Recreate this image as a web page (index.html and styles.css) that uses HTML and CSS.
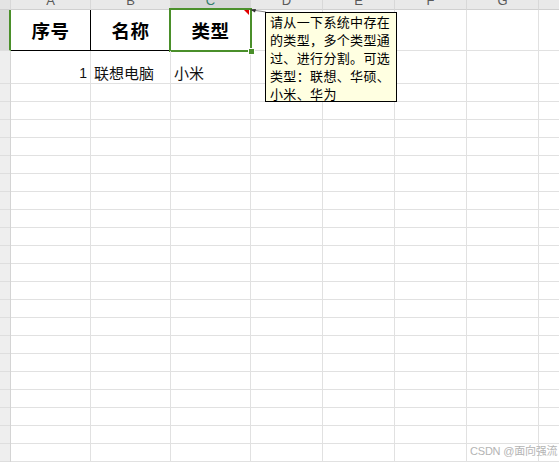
FILE: index.html
```html
<!DOCTYPE html>
<html lang="zh">
<head>
<meta charset="utf-8">
<title>Sheet</title>
<link rel="stylesheet" href="styles.css">
</head>
<body>
<div class="sheet">
  <div class="ch corner"></div>
  <div class="ch"><span>A</span></div>
  <div class="ch"><span>B</span></div>
  <div class="ch ch-sel"><span>C</span></div>
  <div class="ch"><span>D</span></div>
  <div class="ch"><span>E</span></div>
  <div class="ch"><span>F</span></div>
  <div class="ch"><span>G</span></div>
  <div class="ch ch-last"></div>

  <div class="rh rh-sel"></div>
  <div class="c title bl">序号</div>
  <div class="c title bl">名称</div>
  <div class="c title bl sel">类型
    <span class="note-mark"></span>
    <span class="handle"></span>
  </div>
  <div class="c"></div>
  <div class="c"></div>
  <div class="c"></div>
  <div class="c"></div>
  <div class="c last"></div>

  <div class="rh"></div>
  <div class="c val num">1</div>
  <div class="c val">联想电脑</div>
  <div class="c val">小米</div>
  <div class="c"></div>
  <div class="c"></div>
  <div class="c"></div>
  <div class="c"></div>
  <div class="c last"></div>

  <div class="rh fill"></div>
  <div class="c fill"></div>
  <div class="c fill"></div>
  <div class="c fill"></div>
  <div class="c fill"></div>
  <div class="c fill"></div>
  <div class="c fill"></div>
  <div class="c fill"></div>
  <div class="c fill last"></div>
</div>

<svg class="leader" width="20" height="8" viewBox="0 0 20 8">
  <line x1="2" y1="2" x2="16" y2="4" stroke="#888" stroke-width="1"/>
  <polygon points="0,1.5 6,1 5,4.5" fill="#333"/>
</svg>

<div class="note">请从一下系统中存在<br>的类型，多个类型通<br>过、进行分割。可选<br>类型：联想、华硕、<br>小米、华为</div>

<div class="mark">CSDN @面向强流</div>
</body>
</html>
```

FILE: styles.css
```css
html, body {
  margin: 0;
  padding: 0;
  background: #fff;
  overflow: hidden;
}
body {
  width: 559px;
  height: 462px;
  position: relative;
  font-family: "Noto Sans CJK SC", "Noto Sans", sans-serif;
}
.sheet {
  display: grid;
  grid-template-columns: 11px 80px 80px 80px 72px 72px 72px 72px 1fr;
  grid-template-rows: 10px 41px 33px 1fr;
  width: 559px;
  height: 462px;
}
.ch {
  box-sizing: border-box;
  background: #e9e9e9;
  border-right: 1px solid #d8d8d8;
  border-bottom: 1px solid #d0d0d0;
  overflow: hidden;
  text-align: center;
  font-family: "Liberation Sans", Arial, sans-serif;
  font-size: 13px;
  line-height: 0;
  color: #5a5a5a;
}
.ch span {
  display: block;
  padding-top: 1px;
}
.ch.corner {
  background: #e4e4e4;
}
.ch-sel {
  background: #d6d6d6;
  color: #2f7d6a;
}
.ch-last { border-right: none; }

.rh {
  box-sizing: border-box;
  background: #eeeeee;
  border-right: 1px solid #d4d4d4;
  border-bottom: 1px solid #dedede;
}
.rh-sel {
  background: #dadada;
  border-right: 2px solid #4a8f2a;
}
.rh.fill {
  border-bottom: none;
  background-color: #eeeeee;
  background-image: repeating-linear-gradient(to bottom, transparent 0, transparent 17px, #dedede 17px, #dedede 18px);
}

.c {
  box-sizing: border-box;
  border-right: 1px solid #e1e1e1;
  border-bottom: 1px solid #e1e1e1;
  position: relative;
}
.c.last { border-right: none; }
.c.fill {
  border-bottom: none;
  background-image: repeating-linear-gradient(to bottom, transparent 0, transparent 17px, #e1e1e1 17px, #e1e1e1 18px);
}

.title {
  display: flex;
  align-items: center;
  justify-content: center;
  font-size: 18.5px;
  font-weight: 700;
  color: #000;
  letter-spacing: 0.5px;
}
.bl {
  border-right: 1px solid #000;
  border-bottom: 1px solid #000;
}
.sel {
  border-right-color: #000;
}
.sel::after {
  content: "";
  position: absolute;
  left: -2px;
  top: -2px;
  right: -2px;
  bottom: -2px;
  border: 2px solid #4a8f2a;
  pointer-events: none;
}
.note-mark {
  position: absolute;
  top: 0;
  right: 1px;
  width: 0;
  height: 0;
  border-top: 5px solid #e00000;
  border-left: 5px solid transparent;
  z-index: 2;
}
.handle {
  position: absolute;
  right: -4px;
  bottom: -4px;
  width: 5px;
  height: 5px;
  background: #4a8f2a;
  border: 1px solid #fff;
  box-sizing: content-box;
  z-index: 3;
  margin: -1px;
}

.val {
  display: flex;
  align-items: flex-end;
  padding: 0 3px 1px 3px;
  font-size: 15px;
  line-height: 18px;
  color: #111;
}
.val.num {
  justify-content: flex-end;
  font-family: "Liberation Sans", Arial, sans-serif;
  font-size: 14px;
}

.leader {
  position: absolute;
  left: 250px;
  top: 8px;
}
.note {
  position: absolute;
  left: 265px;
  top: 12px;
  width: 132px;
  height: 90px;
  box-sizing: border-box;
  background: #ffffe1;
  border: 1px solid #000;
  padding: 0 0 0 4px;
  font-size: 13px;
  line-height: 18px;
  letter-spacing: 0.35px;
  color: #000;
  white-space: nowrap;
}
.mark {
  position: absolute;
  left: 470px;
  top: 444px;
  font-family: "Liberation Sans", Arial, "Noto Sans CJK SC", sans-serif;
  font-size: 11px;
  line-height: 14px;
  letter-spacing: -0.2px;
  color: #b4b4b4;
  white-space: nowrap;
}
```
